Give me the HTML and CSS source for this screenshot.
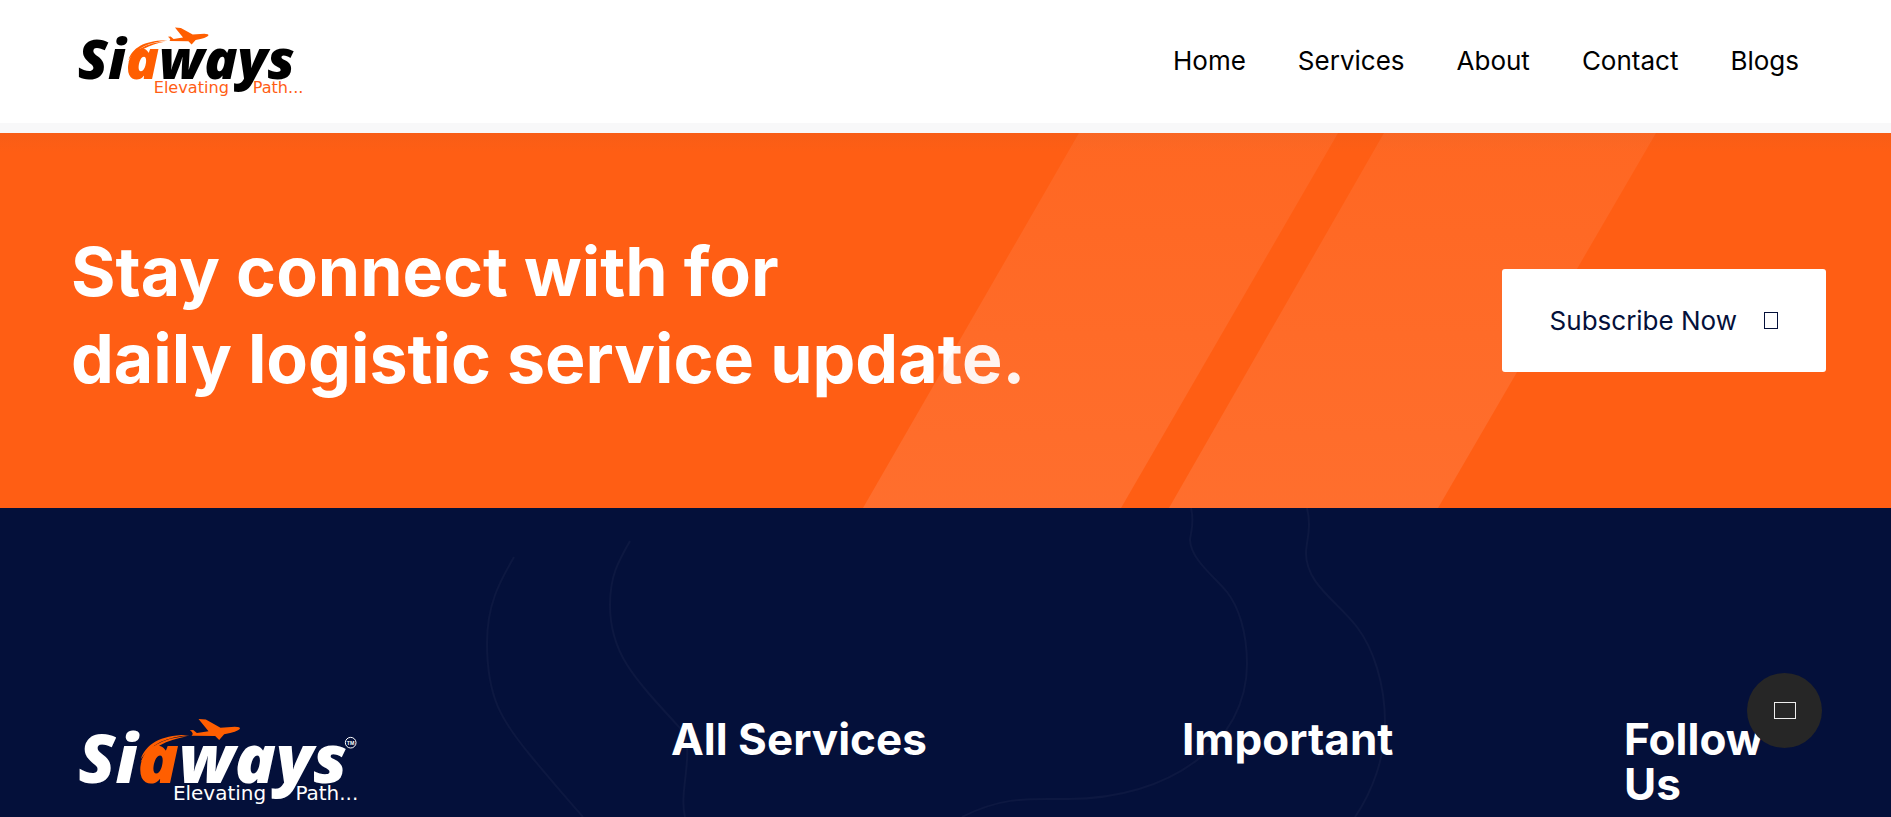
FILE: index.html
```html
<!DOCTYPE html>
<html lang="en">
<head>
<meta charset="utf-8">
<title>Siaways</title>
<link rel="stylesheet" href="styles.css">
</head>
<body>
<header class="header">
  <a class="brand" href="#" aria-label="Siaways">
    <svg class="logo logo-dark" viewBox="60 50 856 264">
      <text class="logo-word" x="58" y="247">Si<tspan class="logo-accent">a</tspan>ways</text>
      <path class="logo-accent" d="M419 56 L441 57 L485 82 L528 79 Q546 79 543 86 Q536 94 496 102 L481 119 L469 107 L398 106 Q407 100 393 90 L403 89 L414 98 L449 93 Z"/>
      <path class="logo-accent" d="M246 176 C260 130 310 101 392 104 C325 109 275 132 246 176 Z"/>
      <path class="logo-accent" d="M245 186 C265 142 310 112 385 108 C320 120 280 142 245 186 Z"/>
      <text class="logo-tag" x="340" y="300">Elevating</text>
      <text class="logo-tag" x="708" y="300">Path...</text>
    </svg>
  </a>
  <nav class="nav">
    <a href="#">Home</a>
    <a href="#">Services</a>
    <a href="#">About</a>
    <a href="#">Contact</a>
    <a href="#">Blogs</a>
  </nav>
</header>
<section class="banner">
  <h2 class="banner-title">Stay connect with for<br>daily logistic service update.</h2>
  <svg class="stripes" viewBox="0 0 1891 375" preserveAspectRatio="none" aria-hidden="true">
    <defs>
      <linearGradient id="fade" x1="0" y1="0" x2="0" y2="1">
        <stop offset="0" stop-color="#ffb9a0" stop-opacity=".1"/>
        <stop offset="1" stop-color="#ffb9a0" stop-opacity=".18"/>
      </linearGradient>
    </defs>
    <path fill="url(#fade)" d="M1079 0H1338L1121 375H863Z"/>
    <path fill="url(#fade)" d="M1384 0H1656L1438 375H1169Z"/>
  </svg>
  <button class="subscribe" type="button">Subscribe Now <span class="glyph"></span></button>
</section>
<footer class="footer">
  <svg class="contours" viewBox="0 0 1891 309" preserveAspectRatio="xMidYMin slice" aria-hidden="true">
    <path d="M514 49C499 75 487 97 487 135C487 190 502 213 530 247C550 271 568 292 583 309"/>
    <path d="M630 33C618 54 610 68 610 97C610 145 633 169 680 220C697 240 678 282 685 309"/>
    <path d="M1191 0C1195 16 1190 27 1190 32C1191 52 1215 69 1227 84C1238 98 1247 123 1247 156C1247 235 1170 291 1068 291C1030 291 1003 288 962 309"/>
    <path d="M1307 0C1312 20 1306 34 1306 45C1306 76 1337 93 1357 119C1373 140 1385 175 1385 215C1385 250 1372 284 1355 309"/>
  </svg>
  <div class="footer-grid">
    <a class="brand" href="#" aria-label="Siaways">
      <svg class="logo logo-light" viewBox="60 50 856 264">
        <text class="logo-word" x="58" y="247">Si<tspan class="logo-accent">a</tspan>ways</text>
        <path class="logo-accent" d="M419 56 L441 57 L485 82 L528 79 Q546 79 543 86 Q536 94 496 102 L481 119 L469 107 L398 106 Q407 100 393 90 L403 89 L414 98 L449 93 Z"/>
        <path class="logo-accent" d="M246 176 C260 130 310 101 392 104 C325 109 275 132 246 176 Z"/>
        <path class="logo-accent" d="M245 186 C265 142 310 112 385 108 C320 120 280 142 245 186 Z"/>
        <text class="logo-tag" x="342" y="300">Elevating</text>
        <text class="logo-tag" x="710" y="300">Path...</text>
        <circle class="logo-ring" cx="876" cy="127" r="16"/>
        <text class="logo-tm" x="876" y="133">TM</text>
      </svg>
    </a>
    <h3>All Services</h3>
    <h3>Important</h3>
    <h3>Follow Us</h3>
  </div>
</footer>
<button class="to-top" type="button" aria-label="Back to top"><span class="glyph glyph-wide"></span></button>
</body>
</html>
```
FILE: styles.css
```css
* { box-sizing: border-box; }
body {
  margin: 0;
  min-height: 100vh;
  overflow: hidden;
  display: flex;
  flex-direction: column;
  background: #04103a;
  font-family: Inter, "Open Sans", sans-serif;
  color: #fff;
}
a { color: inherit; text-decoration: none; }

.header {
  display: flex;
  justify-content: space-between;
  align-items: center;
  padding: 26px 92px 26px 78px;
  background: #fff;
  border-bottom: 10px solid #f8f8f9;
  color: #000;
}
.brand { display: flex; align-items: flex-start; }
.logo { width: 231px; height: 71px; overflow: visible; }
.logo-word { font: italic 800 204px "Open Sans", sans-serif; fill: currentColor; }
.logo-accent { fill: #ff5e00; }
.logo-tag { font: 60px "DejaVu Sans", sans-serif; fill: currentColor; }
.logo-dark .logo-tag { fill: #ff5e14; }
.logo-light { width: 285px; height: 88px; }
.logo-ring { fill: none; stroke: #fff; stroke-width: 3; }
.logo-tm { font: 700 16px "Liberation Sans", sans-serif; fill: #fff; text-anchor: middle; }
.nav { display: flex; gap: 52px; padding-bottom: 2px; font-size: 26px; line-height: 32px; }

.banner {
  position: relative;
  display: flex;
  justify-content: space-between;
  align-items: center;
  padding: 95px 65px 106px 71px;
  background: linear-gradient(rgba(80, 80, 80, .04), transparent 20px), #ff5e14;
}
.banner-title { margin: 0; font-size: 68px; line-height: 87px; font-weight: 700; }
.stripes { position: absolute; inset: 0; width: 100%; height: 100%; }
.subscribe {
  position: relative;
  display: flex;
  align-items: center;
  gap: 27px;
  margin-top: 11px;
  padding: 35px 48px;
  border: 0;
  border-radius: 3px;
  background: #fff;
  color: #04103a;
  font: 26px/33px Inter, "Open Sans", sans-serif;
}
.glyph { width: 14px; height: 17px; border: 1px solid currentColor; }
.glyph-wide { width: 22px; height: 17px; }

.footer { position: relative; flex: 1; padding: 209px 65px 0 79px; }
.contours { position: absolute; inset: 0; width: 100%; height: 100%; fill: none; stroke: #0d1841; stroke-width: 2; }
.footer-grid { position: relative; display: grid; grid-template-columns: 592fr 511fr 442fr 202fr; }
.footer h3 { margin: 0; font-size: 44px; line-height: 45px; font-weight: 700; }
.footer-grid h3:last-child { max-width: 180px; }

.to-top {
  position: fixed;
  right: 69px;
  bottom: 69px;
  display: grid;
  place-items: center;
  width: 75px;
  height: 75px;
  border: 0;
  border-radius: 50%;
  background: #262626;
  color: #eee;
}
```
